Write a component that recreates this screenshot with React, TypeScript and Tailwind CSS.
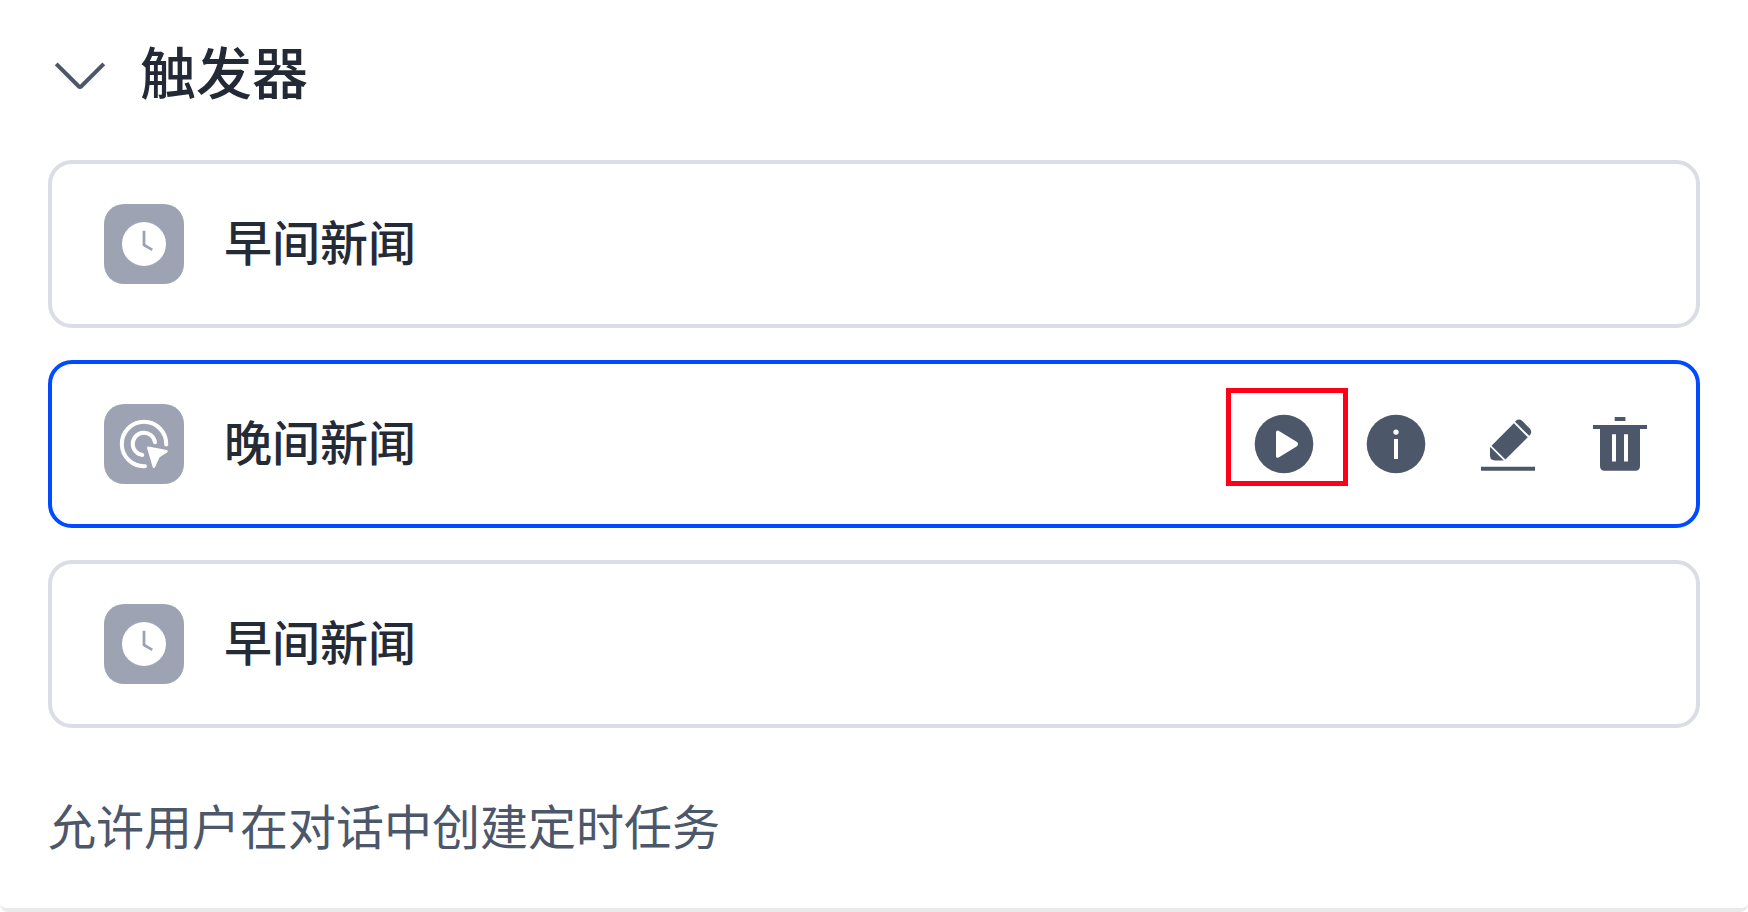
import type { ReactNode } from 'react'

type Trigger = {
  id: number
  name: string
  type: 'schedule' | 'event'
  active?: boolean
}

const triggers: Trigger[] = [
  { id: 1, name: '早间新闻', type: 'schedule' },
  { id: 2, name: '晚间新闻', type: 'event', active: true },
  { id: 3, name: '早间新闻', type: 'schedule' },
]

function ChevronIcon() {
  return (
    <svg viewBox="0 0 64 64" className="size-16" fill="none" stroke="#4c576a" strokeWidth="4">
      <path d="M8.2 25.8 L30.4 48 Q32 49.6 33.6 48 L55.8 25.8" />
    </svg>
  )
}

function ClockIcon() {
  return (
    <svg viewBox="0 0 80 80" className="size-20" fill="none">
      <circle cx="40" cy="40" r="22" fill="#fff" />
      <path d="M40 26.7 V41 L48.3 45.9" stroke="#9da3b2" strokeWidth="2.8" />
    </svg>
  )
}

function EventIcon() {
  return (
    <svg viewBox="0 0 80 80" className="size-20" fill="none" stroke="#fff" strokeWidth="4" strokeLinecap="round">
      <path d="M62.2 40.5 A22.2 22.2 0 1 0 41 62.2" />
      <path d="M51 38.2 A11.2 11.2 0 1 0 38.3 51" />
      <path
        d="M44.2 43.6 L62.6 47.3 L54.6 52.6 L49.9 62.8 Z"
        fill="#fff"
        strokeWidth="2.4"
        strokeLinejoin="round"
      />
    </svg>
  )
}

function PlayIcon() {
  return (
    <svg viewBox="0 0 64 64" className="size-16">
      <circle cx="32" cy="32" r="29.3" fill="#4c576a" />
      <path
        d="M25.7 20.3 L43.7 31.2 Q45 32.1 43.7 33 L25.7 44 Z"
        fill="#fff"
        stroke="#fff"
        strokeWidth="3.4"
        strokeLinejoin="round"
      />
    </svg>
  )
}

function InfoIcon() {
  return (
    <svg viewBox="0 0 64 64" className="size-16">
      <circle cx="32" cy="32" r="29.3" fill="#4c576a" />
      <circle cx="32" cy="20.1" r="2.7" fill="#fff" />
      <path d="M30 27 H34 V47 H30 Z" fill="#fff" />
    </svg>
  )
}

function EditIcon() {
  return (
    <svg viewBox="0 0 64 64" className="size-16" fill="#4c576a">
      <path d="M5 54.7 H59 V58.7 H5 Z" />
      <path d="M39.7 9 Q43 6.2 46.3 9 L53.8 16.5 Q56.6 20 53.8 23.2 L53.2 23.8 L39 9.8 Z" />
      <path d="M37.9 11.3 L51.8 25.2 L29.4 47.6 L15.5 33.7 Z" />
      <path d="M14.4 34.9 L27.8 48.4 H19 Q14 48.4 14 43.5 V36 Z" />
    </svg>
  )
}

function TrashIcon() {
  return (
    <svg viewBox="0 0 64 64" className="size-16" fill="#4c576a">
      <path d="M26.7 5 H37.4 V9 H26.7 Z" />
      <path d="M5 13 H59 V17 H52 V54 Q52 58.7 47.3 58.7 H16.7 Q12 58.7 12 54 V17 H5 Z" />
      <path d="M24 22.3 H28 V49.5 H24 Z M36 22.3 H40 V49.5 H36 Z" fill="#fff" />
    </svg>
  )
}

function ActionButton({ label, children }: { label: string; children: ReactNode }) {
  return (
    <button type="button" aria-label={label} className="relative size-16 shrink-0 cursor-pointer">
      {children}
    </button>
  )
}

function TriggerCard({ trigger }: { trigger: Trigger }) {
  return (
    <li
      className={`flex items-center rounded-3xl border-4 py-10 pr-11 pl-13 ${
        trigger.active ? 'border-[#004bff]' : 'border-[#dbdde4]'
      }`}
    >
      <span className="size-20 shrink-0 rounded-[20px] bg-[#9da3b2]">
        {trigger.type === 'schedule' ? <ClockIcon /> : <EventIcon />}
      </span>
      <span className="ml-10 flex-1 pb-2 text-5xl font-medium text-[#252a37]">{trigger.name}</span>
      {trigger.active && (
        <div className="flex gap-12">
          <ActionButton label="运行">
            <PlayIcon />
            <span className="absolute -top-6 -right-8 -bottom-2.5 -left-6.5 border-5 border-[#ff0019]" />
          </ActionButton>
          <ActionButton label="详情">
            <InfoIcon />
          </ActionButton>
          <ActionButton label="编辑">
            <EditIcon />
          </ActionButton>
          <ActionButton label="删除">
            <TrashIcon />
          </ActionButton>
        </div>
      )}
    </li>
  )
}

export default function App() {
  return (
    <main className="bg-white font-['Noto_Sans_CJK_SC',sans-serif]">
      <section className="rounded-b-lg border-b-4 border-[#e8eaec] px-12 pt-8 pb-12">
        <h2>
          <button
            type="button"
            aria-expanded="true"
            className="flex cursor-pointer items-center gap-7 text-[56px] leading-19 font-medium text-[#242a35]"
          >
            <ChevronIcon />
            触发器
          </button>
        </h2>
        <ul className="mt-13 flex flex-col gap-8">
          {triggers.map((trigger) => (
            <TriggerCard key={trigger.id} trigger={trigger} />
          ))}
        </ul>
        <p className="mt-15 text-5xl leading-18 text-[#4c576a]">允许用户在对话中创建定时任务</p>
      </section>
    </main>
  )
}
